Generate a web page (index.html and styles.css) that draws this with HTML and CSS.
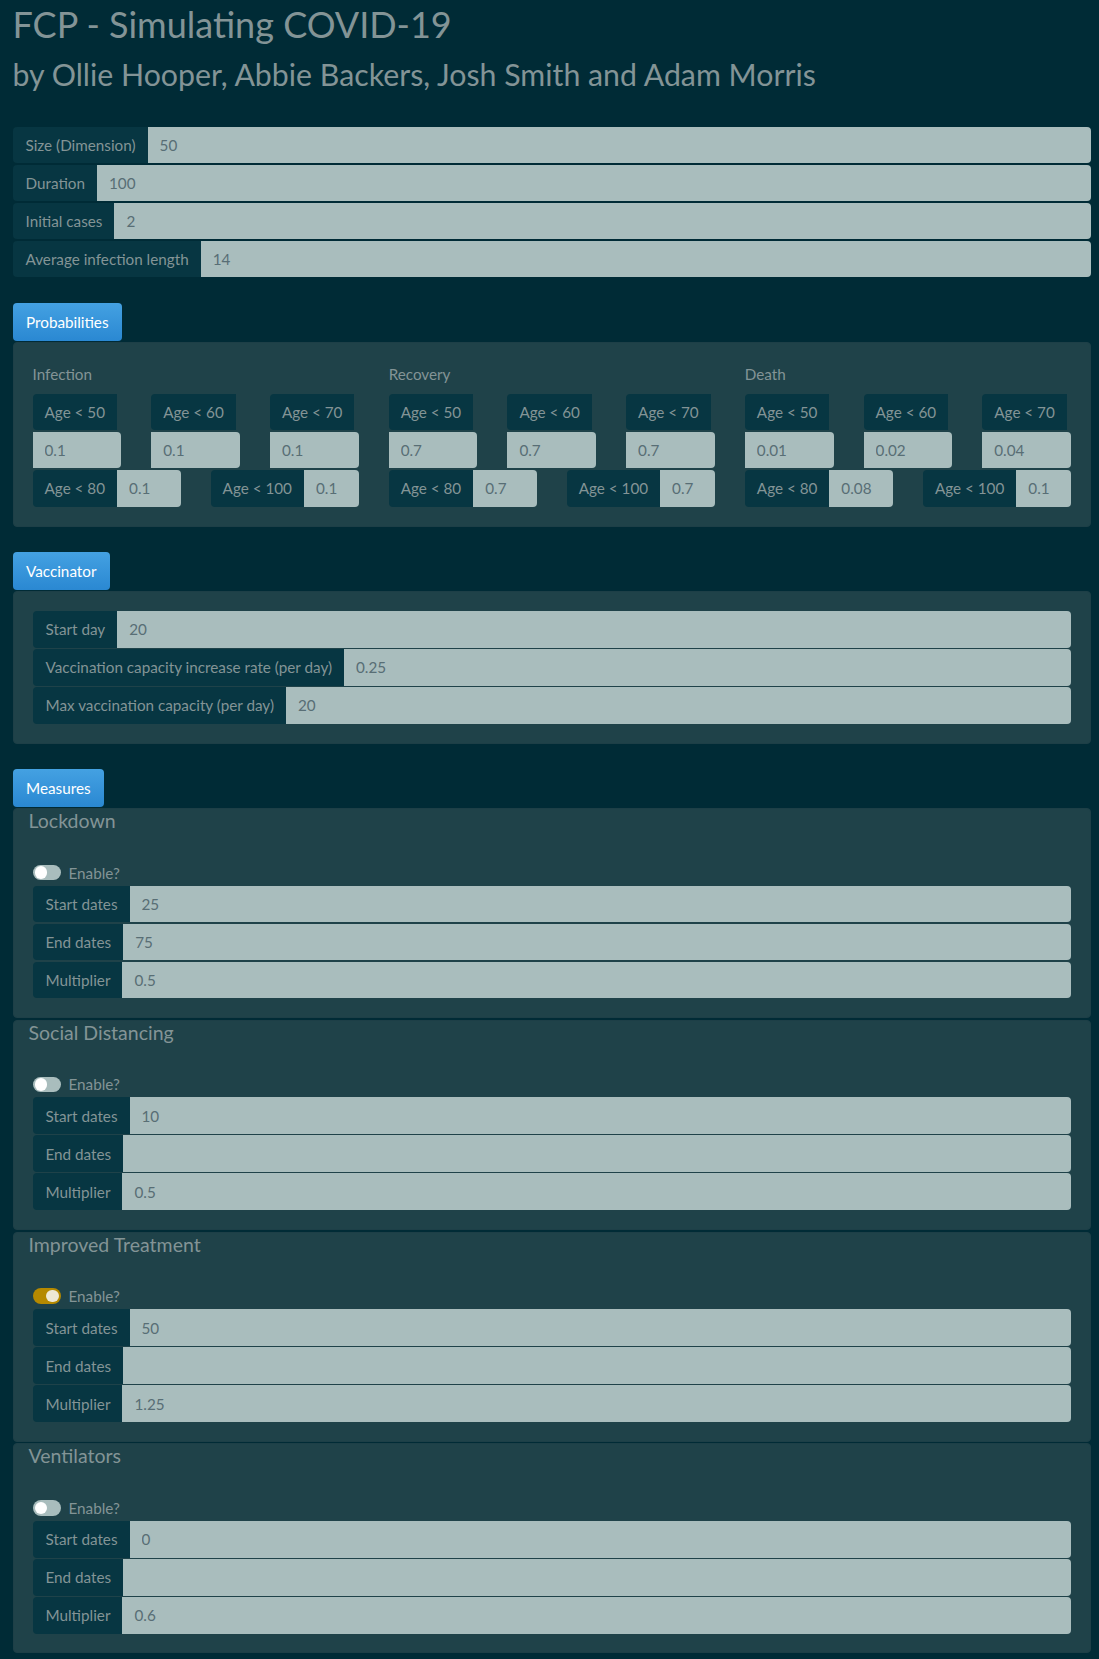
FILE: index.html
```html
<!DOCTYPE html>
<html lang="en">
<head>
<meta charset="utf-8">
<title>FCP - Simulating COVID-19</title>
<link rel="stylesheet" href="styles.css">
</head>
<body>
<div class="page">
  <h1 class="title">FCP - Simulating COVID-19</h1>
  <h2 class="subtitle">by Ollie Hooper, Abbie Backers, Josh Smith and Adam Morris</h2>

  <div class="basics">
    <div class="igroup"><span class="ilabel">Size (Dimension)</span><input class="ival" value="50"></div>
    <div class="igroup"><span class="ilabel">Duration</span><input class="ival" value="100"></div>
    <div class="igroup"><span class="ilabel">Initial cases</span><input class="ival" value="2"></div>
    <div class="igroup"><span class="ilabel">Average infection length</span><input class="ival" value="14"></div>
  </div>

  <section class="section">
    <div class="tab">Probabilities</div>
    <div class="well">
      <div class="prob-grid">
        <div class="prob-col">
          <div class="prob-head">Infection</div>
          <div class="prob-row3">
            <div class="pcell"><span class="plabel">Age &lt; 50</span><input class="pinput" value="0.1"></div>
            <div class="pcell"><span class="plabel">Age &lt; 60</span><input class="pinput" value="0.1"></div>
            <div class="pcell"><span class="plabel">Age &lt; 70</span><input class="pinput" value="0.1"></div>
          </div>
          <div class="prob-row2">
            <div class="pcell inline"><span class="plabel">Age &lt; 80</span><input class="pinput" value="0.1"></div>
            <div class="pcell inline"><span class="plabel">Age &lt; 100</span><input class="pinput" value="0.1"></div>
          </div>
        </div>
        <div class="prob-col">
          <div class="prob-head">Recovery</div>
          <div class="prob-row3">
            <div class="pcell"><span class="plabel">Age &lt; 50</span><input class="pinput" value="0.7"></div>
            <div class="pcell"><span class="plabel">Age &lt; 60</span><input class="pinput" value="0.7"></div>
            <div class="pcell"><span class="plabel">Age &lt; 70</span><input class="pinput" value="0.7"></div>
          </div>
          <div class="prob-row2">
            <div class="pcell inline"><span class="plabel">Age &lt; 80</span><input class="pinput" value="0.7"></div>
            <div class="pcell inline"><span class="plabel">Age &lt; 100</span><input class="pinput" value="0.7"></div>
          </div>
        </div>
        <div class="prob-col">
          <div class="prob-head">Death</div>
          <div class="prob-row3">
            <div class="pcell"><span class="plabel">Age &lt; 50</span><input class="pinput" value="0.01"></div>
            <div class="pcell"><span class="plabel">Age &lt; 60</span><input class="pinput" value="0.02"></div>
            <div class="pcell"><span class="plabel">Age &lt; 70</span><input class="pinput" value="0.04"></div>
          </div>
          <div class="prob-row2">
            <div class="pcell inline"><span class="plabel">Age &lt; 80</span><input class="pinput" value="0.08"></div>
            <div class="pcell inline"><span class="plabel">Age &lt; 100</span><input class="pinput" value="0.1"></div>
          </div>
        </div>
      </div>
    </div>
  </section>

  <section class="section">
    <div class="tab">Vaccinator</div>
    <div class="well">
      <div class="igroup"><span class="ilabel">Start day</span><input class="ival" value="20"></div>
      <div class="igroup"><span class="ilabel">Vaccination capacity increase rate (per day)</span><input class="ival" value="0.25"></div>
      <div class="igroup"><span class="ilabel">Max vaccination capacity (per day)</span><input class="ival" value="20"></div>
    </div>
  </section>

  <section class="section">
    <div class="tab">Measures</div>
    <div class="measures">
      <div class="measure">
        <h4 class="measure-title">Lockdown</h4>
        <label class="switch-row"><span class="switch"></span><span>Enable?</span></label>
        <div class="igroup"><span class="ilabel">Start dates</span><input class="ival" value="25"></div>
        <div class="igroup"><span class="ilabel">End dates</span><input class="ival" value="75"></div>
        <div class="igroup"><span class="ilabel">Multiplier</span><input class="ival" value="0.5"></div>
      </div>
      <div class="measure">
        <h4 class="measure-title">Social Distancing</h4>
        <label class="switch-row"><span class="switch"></span><span>Enable?</span></label>
        <div class="igroup"><span class="ilabel">Start dates</span><input class="ival" value="10"></div>
        <div class="igroup"><span class="ilabel">End dates</span><input class="ival" value=""></div>
        <div class="igroup"><span class="ilabel">Multiplier</span><input class="ival" value="0.5"></div>
      </div>
      <div class="measure">
        <h4 class="measure-title">Improved Treatment</h4>
        <label class="switch-row"><span class="switch on"></span><span>Enable?</span></label>
        <div class="igroup"><span class="ilabel">Start dates</span><input class="ival" value="50"></div>
        <div class="igroup"><span class="ilabel">End dates</span><input class="ival" value=""></div>
        <div class="igroup"><span class="ilabel">Multiplier</span><input class="ival" value="1.25"></div>
      </div>
      <div class="measure">
        <h4 class="measure-title">Ventilators</h4>
        <label class="switch-row"><span class="switch"></span><span>Enable?</span></label>
        <div class="igroup"><span class="ilabel">Start dates</span><input class="ival" value="0"></div>
        <div class="igroup"><span class="ilabel">End dates</span><input class="ival" value=""></div>
        <div class="igroup"><span class="ilabel">Multiplier</span><input class="ival" value="0.6"></div>
      </div>
    </div>
  </section>
</div>
</body>
</html>
```
FILE: styles.css
```css
* { box-sizing: border-box; }

html, body {
  margin: 0;
  background: #002b36;
}

body {
  font-family: Lato, "Noto Sans", sans-serif;
  font-size: 15.25px;
  color: #839496;
}

.page {
  padding: 0 8px 6px 12.5px;
}

.title {
  margin: 4px 0 0 0;
  font-size: 36px;
  line-height: 40px;
  font-weight: 400;
  color: #839496;
}

.subtitle {
  margin: 12px 0 0 0;
  font-size: 30.3px;
  line-height: 36px;
  font-weight: 400;
  color: #839496;
}

.basics {
  margin-top: 34.5px;
}

.igroup {
  display: flex;
  height: 36.5px;
  margin-bottom: 1.5px;
}

.igroup:last-child { margin-bottom: 0; }

.ilabel {
  display: flex;
  align-items: center;
  padding: 0 12px 0 13px;
  background: #073642;
  color: #839496;
  border-radius: 4px 0 0 4px;
  white-space: nowrap;
}

.ival,
.pinput {
  flex: 1;
  width: 0;
  min-width: 0;
  border: 0;
  margin: 0;
  padding: 0 12px;
  background: #a9bdbd;
  color: #586e75;
  font: inherit;
  border-radius: 0 4px 4px 0;
  outline: none;
}

.section {
  margin-top: 25.5px;
}

.tab {
  display: inline-block;
  height: 38px;
  line-height: 38px;
  padding: 0 13.5px;
  color: #fff;
  background: linear-gradient(#44a1e2, #2a88d2);
  border-radius: 4px;
  margin-bottom: 1px;
}

.well {
  background: #1f4249;
  border: 1px solid #1d3f47;
  border-radius: 4px;
  padding: 19px;
}

/* probabilities */
.prob-grid {
  display: grid;
  grid-template-columns: repeat(3, minmax(0, 1fr));
  column-gap: 30px;
}

.prob-col { min-width: 0; }

.prob-head {
  line-height: 24px;
  margin-bottom: 8px;
}

.prob-row3 {
  display: grid;
  grid-template-columns: repeat(3, minmax(0, 1fr));
  column-gap: 30px;
}

.prob-row2 {
  display: grid;
  grid-template-columns: repeat(2, minmax(0, 1fr));
  column-gap: 30px;
  margin-top: 2px;
}

.pcell {
  display: flex;
  flex-wrap: wrap;
  row-gap: 2px;
  min-width: 0;
}

.plabel {
  display: flex;
  align-items: center;
  height: 36.5px;
  padding: 0 12px;
  background: #073642;
  border-radius: 4px 0 0 4px;
  white-space: nowrap;
}

.pcell .pinput {
  flex: 0 0 100%;
  width: 100%;
  height: 36px;
}

.pcell.inline {
  flex-wrap: nowrap;
}

.pcell.inline .pinput {
  flex: 1 1 0;
  width: 0;
  height: 36.5px;
}

/* measures */
.measure {
  background: #1f4249;
  border: 1px solid #1d3f47;
  border-radius: 4px;
  padding: 0 19px 18.8px 19px;
  margin-bottom: 1.8px;
}

.measure-title {
  margin: 0 0 0 -4px;
  font-size: 19.5px;
  line-height: 24px;
  font-weight: 400;
  color: #839496;
}

.switch-row {
  display: flex;
  align-items: center;
  gap: 8px;
  height: 22px;
  margin-top: 28.5px;
  margin-bottom: 2.2px;
  color: #839496;
}

.switch {
  position: relative;
  width: 28px;
  height: 15.5px;
  border-radius: 8px;
  background: #a9bdbd;
  flex: 0 0 auto;
}

.switch::after {
  content: "";
  position: absolute;
  top: 1.5px;
  left: 2px;
  width: 12.5px;
  height: 12.5px;
  border-radius: 50%;
  background: #fff;
}

.switch.on {
  background: #b58900;
}

.switch.on::after {
  left: auto;
  right: 2px;
  background: #eee8d5;
}
```
